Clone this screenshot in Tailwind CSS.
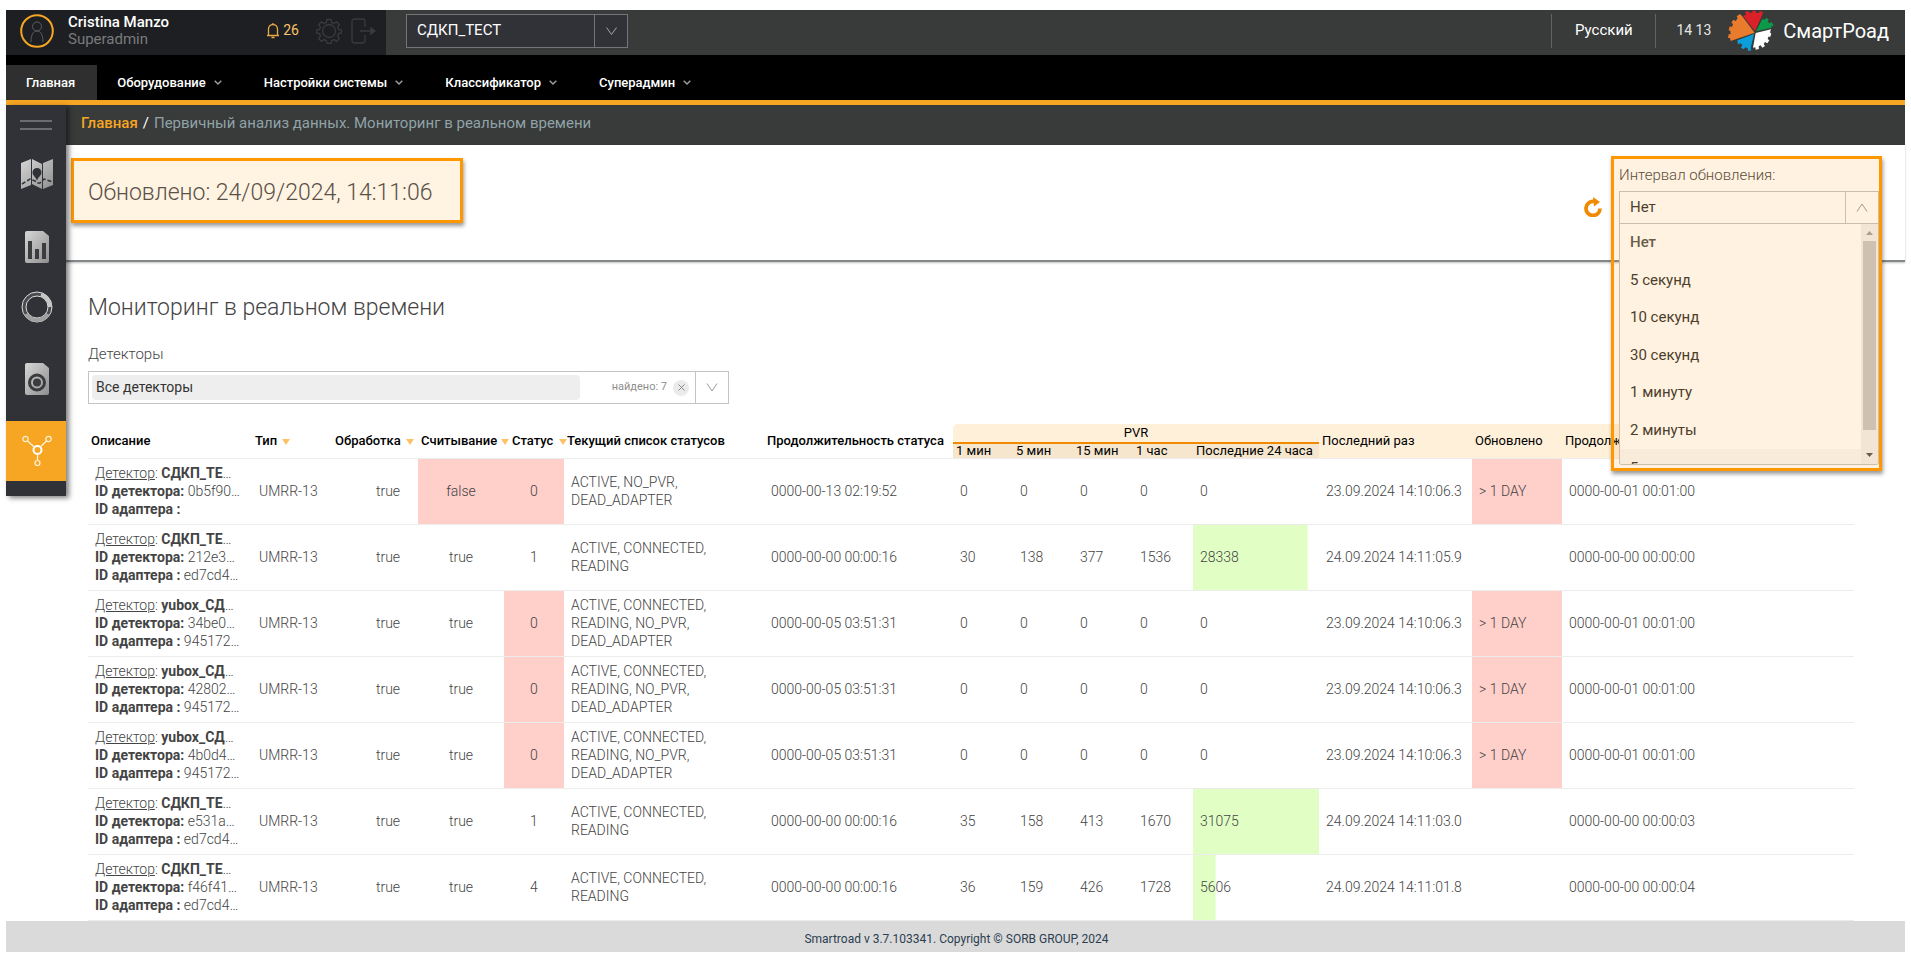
<!DOCTYPE html>
<html lang="ru">
<head>
<meta charset="utf-8">
<title>СмартРоад</title>
<script src="https://cdn.jsdelivr.net/npm/@tailwindcss/browser@4"></script>
</head>
<body class="bg-white px-[6px] pt-[10px] font-[Roboto,sans-serif] text-[14px] text-[#444]">

<!-- Top bar -->
<header>
  <div class="flex h-[45px] items-center bg-[#393a3a]">
    <div class="flex h-full w-[380px] items-center bg-[#1d1f22] pb-[4px] pl-[14px] pr-[10px]">
      <svg class="h-[34px] w-[34px]" viewBox="0 0 34 34" fill="none"><circle cx="17" cy="17" r="15.8" stroke="#f6a623" stroke-width="2"/><circle cx="17" cy="12.5" r="4.500" stroke="#5c5d60"/><path d="M11 28c0-7 2-11 6-11s6 4 6 11" stroke="#5c5d60"/></svg>
      <div class="ml-[14px] flex-1 text-[15px] leading-[17px]">
        <div class="font-medium text-white">Cristina Manzo</div>
        <div class="text-[#7a7b7d]">Superadmin</div>
      </div>
      <button class="flex items-center gap-[3px] text-[14px] text-[#f9c46b]" aria-label="Уведомления">
        <svg class="h-[17px] w-[14px]" viewBox="0 0 14 17" fill="none" stroke="#e8a94a" stroke-width="1.300"><path d="M1 13.500h12M2.500 13.500V7a4.500 4.500 0 0 1 9 0v6.500M7 2.500V1M5.500 15.500h3"/></svg>26
      </button>
      <button class="ml-[17px]" aria-label="Настройки"><svg class="h-[26px] w-[26px]" viewBox="0 0 26 26" fill="none" stroke="#3a3b3d" stroke-width="1.300"><circle cx="13" cy="13" r="6.500"/><path d="M11 1.500h4l.6 3 2.400 1 2.600-1.700 2.700 2.700-1.700 2.600 1 2.400 2.900.5v3l-2.900.6-1 2.400 1.700 2.600-2.700 2.700-2.600-1.700-2.400 1-.6 2.900h-4l-.6-2.900-2.400-1-2.600 1.700-2.700-2.700 1.700-2.600-1-2.400-2.900-.6v-3l2.900-.5 1-2.400-1.700-2.600 2.700-2.700 2.600 1.700 2.400-1z"/></svg></button>
      <button class="ml-[9px]" aria-label="Выход"><svg class="h-[26px] w-[25px]" viewBox="0 0 25 26" fill="none" stroke="#3a3b3d" stroke-width="1.300"><path d="M14 9V3.500A2.500 2.500 0 0 0 11.500 1h-8A2.500 2.500 0 0 0 1 3.500v19A2.500 2.500 0 0 0 3.500 25h8a2.500 2.500 0 0 0 2.500-2.500V17M9 13h14"/><path d="M20 10l4 3-4 3z" fill="#3a3b3d"/></svg></button>
    </div>
    <div class="relative mb-[4px] ml-[20px] flex h-[34px] w-[222px] border border-[#747577] bg-[#313238]">
      <select class="w-full appearance-none pb-[1px] pl-[10px] text-[15px] text-white" aria-label="Проект"><option>СДКП_ТЕСТ</option></select>
      <span class="pointer-events-none absolute inset-y-0 right-0 flex w-[33px] items-center justify-center border-l border-[#747577]"><svg class="h-[8px] w-[11px]" viewBox="0 0 11 8" fill="none" stroke="#a5a6a8"><path d="M.5.5l5 7 5-7"/></svg></span>
    </div>
    <div class="ml-auto flex items-center pb-[4px]">
      <button class="flex h-[34px] w-[105px] items-center justify-center border-x border-[#626363] text-[15px] text-white">Русский</button>
      <span class="ml-[20px] text-[14px] text-[#e6e6e6]">14 13</span>
      <a href="#" class="ml-[5px] flex items-center text-[20px] text-white"><svg class="h-[50px] w-[67px]" viewBox="0 1 201 150"><path fill="#e87b2c" d="M116 81 44 106 42 97 36 97 38 86 44 85 43 76 38 74 41 62 48 64 51 55 46 51 52 42 59 46 65 38 62 32 72 25 78 31z"/><path fill="#da2128" d="M117 77 81 31 90 27 87 19 97 16 101 22 109 20 109 15 119 15 120 21 128 22 131 16 141 19 139 27z"/><path fill="#0b9a4a" d="M120 77 139 40 146 43 150 36 158 41 155 48 160 53 166 49 173 59 165 63 167 66z"/><path fill="#fff" d="M119 82 165 71 162 80 166 84 163 93 157 93 155 100 160 104 154 113 147 109 143 115 147 121 139 126 134 119 128 122 129 130 119 132 118 125 111 126z"/><path fill="#0a9fdb" d="M114 85 104 127 106 134 96 136 95 128 88 125 83 131 75 126 79 118 74 113 66 116 64 104z"/></svg><span class="pr-[16px]">СмартРоад</span></a>
    </div>
  </div>
  <nav class="flex h-[50px] items-end border-b-[5px] border-[#f6a623] bg-black text-[13px] font-medium text-white">
    <a href="#" class="flex h-[35px] items-center bg-[#2f2f2f] pl-[20px] pr-[22px]">Главная</a>
    <button class="ml-[20px] flex h-[35px] items-center gap-[8px] pr-[22px]">Оборудование <svg class="h-[5px] w-[8px]" viewBox="0 0 8 5" fill="none" stroke="#a0a0a0" stroke-width="1.400"><path d="M.7.7 4 4 7.300.7"/></svg></button>
    <button class="ml-[20px] flex h-[35px] items-center gap-[8px] pr-[22px]">Настройки системы <svg class="h-[5px] w-[8px]" viewBox="0 0 8 5" fill="none" stroke="#a0a0a0" stroke-width="1.400"><path d="M.7.7 4 4 7.300.7"/></svg></button>
    <button class="ml-[20px] flex h-[35px] items-center gap-[8px] pr-[22px]">Классификатор <svg class="h-[5px] w-[8px]" viewBox="0 0 8 5" fill="none" stroke="#a0a0a0" stroke-width="1.400"><path d="M.7.7 4 4 7.300.7"/></svg></button>
    <button class="ml-[20px] flex h-[35px] items-center gap-[8px] pr-[22px]">Суперадмин <svg class="h-[5px] w-[8px]" viewBox="0 0 8 5" fill="none" stroke="#a0a0a0" stroke-width="1.400"><path d="M.7.7 4 4 7.300.7"/></svg></button>
  </nav>
</header>

<div class="flex items-start">
  <!-- Side menu -->
  <aside class="z-10 flex w-[60px] shrink-0 flex-col bg-[#313238] pb-[15px] shadow-[3px_2px_5px_rgba(0,0,0,0.5)]">
    <svg class="absolute" width="0" height="0"><defs><linearGradient id="g" x1="0" y1="0" x2="1" y2="1"><stop offset="0" stop-color="#d6d6d6"/><stop offset="1" stop-color="#8f8f8f"/></linearGradient></defs></svg>
    <button class="flex h-[40px] flex-col items-center justify-center gap-[6px]" aria-label="Меню"><span class="h-[2px] w-[32px] bg-[#6b6c70]"></span><span class="h-[2px] w-[32px] bg-[#6b6c70]"></span></button>
    <a href="#" class="flex h-[60px] items-center justify-center pb-[2px] pl-[2px]" aria-label="Карта"><svg class="h-[32px] w-[34px]" viewBox="0 0 34 32"><path fill="url(#g)" d="M1 5 11 1 11 27 1 31zM12 1l10 5v25l-10-5zM23 5l10-4v26l-10 4z"/><path fill="#313238" d="M17 10a4.500 4.500 0 0 1 4.500 4.500c0 3-3 4-4.500 8-1.500-4-4.500-5-4.500-8A4.500 4.500 0 0 1 17 10z"/><path d="M2 26l8-5 5 2 2 2 3 0 4-4 9 3" fill="none" stroke="#313238" stroke-width="1.500" stroke-dasharray="4 2"/></svg></a>
    <a href="#" class="mt-3 flex h-[60px] items-center justify-center pl-[2px]" aria-label="Отчёты"><svg class="h-[32px] w-[24px]" viewBox="0 0 24 32"><path fill="url(#g)" d="M2 0h16l6 5v25a2 2 0 0 1-2 2H2a2 2 0 0 1-2-2V2a2 2 0 0 1 2-2z"/><path fill="#3b3c40" d="M3 10h4v18H3zM10 18h4v10h-4zM17 12h4v16h-4z"/></svg></a>
    <a href="#" class="flex h-[60px] items-center justify-center pl-[2px]" aria-label="Статистика"><svg class="h-[32px] w-[32px]" viewBox="0 0 32 32" fill="none"><circle cx="16" cy="16" r="13" stroke="#4a4b4e" stroke-width="4"/><circle cx="16" cy="16" r="15" stroke="#dcdcdc"/><circle cx="16" cy="16" r="11" stroke="#dcdcdc"/><path d="M20 3.600A13 13 0 0 1 29 16" stroke="#c6c6c6" stroke-width="4"/><path d="M27 23A13 13 0 0 1 5 23" stroke="#a0a0a0" stroke-width="4"/></svg></a>
    <a href="#" class="mt-3 flex h-[60px] items-center justify-center pl-[2px]" aria-label="Камеры"><svg class="h-[32px] w-[24px]" viewBox="0 0 24 32"><path fill="url(#g)" d="M2 0h16l6 5v25a2 2 0 0 1-2 2H2a2 2 0 0 1-2-2V2a2 2 0 0 1 2-2z"/><circle cx="12" cy="19.500" r="7.500" fill="none" stroke="#3b3c40" stroke-width="3"/><circle cx="12" cy="19.500" r="4" fill="#3b3c40"/></svg></a>
    <a href="#" class="mt-3 flex h-[60px] items-center justify-center bg-[#f6a623] pl-[2px]" aria-label="Детекторы"><svg class="h-[32px] w-[32px]" viewBox="0 0 32 32" fill="none" stroke="#fff"><circle cx="16.500" cy="15" r="4" stroke-width="2"/><g stroke="#fff3dc" stroke-width="1.200"><circle cx="4.500" cy="4" r="2.700"/><circle cx="27.500" cy="4" r="2.700"/><circle cx="16.500" cy="28" r="2.500"/><path d="M6.500 6l7 6.200M25.500 6l-6.500 6.200M16.500 19v6.500"/></g></svg></a>
  </aside>

  <main class="min-w-0 flex-1">
    <div class="flex h-[40px] items-center gap-[5px] bg-[#393a3a] pb-[4px] pl-[15px] text-[15px]">
      <a href="#" class="font-medium text-[#f6a623]">Главная</a><span class="text-white">/</span><span class="text-[#8fa3a8]">Первичный анализ данных. Мониторинг в реальном времени</span>
    </div>

    <section class="flex h-[117px] justify-between border-b-2 border-[#858888] pr-[26px] shadow-[0_1px_2px_rgba(0,0,0,0.25)]">
      <div class="ml-[5px] mt-[13px] flex h-[65px] items-center border-[3px] border-[#ff9800] bg-[#fff3e2] pl-[14px] pr-[28px] pt-[5px] shadow-[1px_3px_4px_rgba(0,0,0,0.4)]">
        <h1 class="text-[23px] leading-[34px] font-light text-[#5a5048]">Обновлено: 24/09/2024, 14:11:06</h1>
      </div>
      <div class="flex items-start">
        <button class="mr-[17px] mt-[52px]" aria-label="Обновить"><svg class="h-[20px] w-[18px]" viewBox="0 0 18 20"><path d="M10 4.500A7 7 0 1 0 16 11.500" fill="none" stroke="#f08a00" stroke-width="3.800"/><path d="M9 0l7 5-6 4.500z" fill="#f08a00"/></svg></button>
        <div class="relative z-20 w-[260px] pt-[19px]">
          <label for="interval" class="block h-[27px] text-[15px] leading-[22px] font-light">Интервал обновления:</label>
          <div class="relative flex h-[33px] border border-[#c4c4c4] bg-white">
            <select id="interval" class="w-full appearance-none pl-[10px] text-[15px] text-[#333]"><option>Нет</option></select>
            <span class="pointer-events-none absolute inset-y-0 right-0 flex w-[33px] items-center justify-center border-l border-[#c4c4c4]"><svg class="h-[9px] w-[12px]" viewBox="0 0 12 9" fill="none" stroke="#999"><path d="M1 8.500l5-7.500 5 7.500"/></svg></span>
          </div>
          <div class="absolute inset-x-0 top-full flex h-[241px] overflow-hidden rounded-b-[3px] border border-t-0 border-[#c4c4c4] bg-white">
            <ul role="listbox" aria-label="Интервал обновления" class="flex-1 text-[15px] text-[#333]">
              <li role="option" class="pl-[10px] leading-[37px] font-medium text-[#555]">Нет</li>
              <li role="option" class="pl-[10px] leading-[38px]">5 секунд</li>
              <li role="option" class="pl-[10px] leading-[37px]">10 секунд</li>
              <li role="option" class="pl-[10px] leading-[38px]">30 секунд</li>
              <li role="option" class="pl-[10px] leading-[37px]">1 минуту</li>
              <li role="option" class="pl-[10px] leading-[38px]">2 минуты</li>
              <li role="option" class="bg-[#f7f7f7] pl-[10px] leading-[38px]">5 минут</li>
            </ul>
            <div class="flex w-[17px] flex-col items-center justify-between bg-[#f1f1f1] py-[7px]">
              <svg class="h-[4px] w-[7px]" viewBox="0 0 7 4"><path d="M0 4 3.500 0 7 4z" fill="#a0a0a0"/></svg>
              <span class="mb-[18px] h-[189px] w-[13px] bg-[#c8c8c8]"></span>
              <svg class="h-[4px] w-[7px]" viewBox="0 0 7 4"><path d="M0 0 3.500 4 7 0z" fill="#555"/></svg>
            </div>
          </div>
          <div class="pointer-events-none absolute -left-[8px] -right-[3px] top-[11px] h-[315px] border-[3px] border-[#ff9800] bg-[#ff9800]/12 shadow-[1px_3px_4px_rgba(0,0,0,0.4)]"></div>
        </div>
      </div>
    </section>

    <section class="pl-[22px] pr-[51px]">
      <h2 class="pt-[29px] text-[23px] leading-[34px] font-light text-[#444]">Мониторинг в реальном времени</h2>
      <label for="detectors" class="mt-[18px] block text-[15px] leading-[22px] font-light">Детекторы</label>
      <div class="mt-[6px] flex h-[33px] w-[641px] items-center border border-[#c4c4c4] pl-[3px]">
        <input id="detectors" value="Все детекторы" class="h-[25px] w-[488px] rounded-[4px] bg-[#eee] px-[4px] pb-[2px] text-[14px] text-[#333]">
        <span class="ml-auto text-[11px] text-[#8e8e8e]">найдено: 7</span>
        <button class="mx-[6px] flex h-[16px] w-[16px] items-center justify-center rounded-full bg-[#ebebeb]" aria-label="Очистить"><svg class="h-[7px] w-[7px]" viewBox="0 0 7 7" stroke="#888"><path d="M.5.5l6 6M6.500.5l-6 6"/></svg></button>
        <button class="flex h-full w-[33px] items-center justify-center border-l border-[#c4c4c4]" aria-label="Открыть список"><svg class="h-[9px] w-[12px]" viewBox="0 0 12 9" fill="none" stroke="#999"><path d="M1 .5l5 7.500 5-7.500"/></svg></button>
      </div>

      <table class="mt-[20px] w-full table-fixed border-separate border-spacing-0 text-[14px] leading-[18px]">
        <colgroup>
          <col class="w-[164px]"><col class="w-[80px]"><col class="w-[86px]"><col class="w-[86px]"><col class="w-[60px]"><col class="w-[200px]"><col class="w-[189px]">
          <col class="w-[60px]"><col class="w-[60px]"><col class="w-[60px]"><col class="w-[60px]"><col class="w-[126px]"><col class="w-[153px]"><col class="w-[90px]"><col>
        </colgroup>
        <thead class="text-left text-[13px] whitespace-nowrap text-black">
          <tr class="h-[20px]">
            <th rowspan="2" class="border-b border-[#ececec] p-0 pl-[3px] font-medium">Описание</th>
            <th rowspan="2" class="border-b border-[#ececec] p-0 pl-[3px] font-medium">Тип <span class="ml-[2px] inline-block border-x-4 border-t-[6px] border-x-transparent border-t-[#ffc168]"></span></th>
            <th rowspan="2" class="border-b border-[#ececec] p-0 pl-[3px] font-medium">Обработка <span class="ml-[2px] inline-block border-x-4 border-t-[6px] border-x-transparent border-t-[#ffc168]"></span></th>
            <th rowspan="2" class="border-b border-[#ececec] p-0 pl-[3px] font-medium">Считывание<span class="ml-[4px] inline-block border-x-4 border-t-[6px] border-x-transparent border-t-[#ffc168]"></span></th>
            <th rowspan="2" class="border-b border-[#ececec] p-0 pl-[8px] font-medium">Статус <span class="ml-[2px] inline-block border-x-4 border-t-[6px] border-x-transparent border-t-[#ffc168]"></span></th>
            <th rowspan="2" class="border-b border-[#ececec] p-0 pl-[3px] font-medium">Текущий список статусов</th>
            <th rowspan="2" class="border-b border-[#ececec] p-0 pl-[3px] font-medium">Продолжительность статуса</th>
            <th colspan="5" class="rounded-tl-[5px] border-b-2 border-[#f08a00] bg-[#fff0da] p-0 text-center font-normal">PVR</th>
            <th rowspan="2" class="border-b border-[#ececec] bg-[#fff0da] p-0 pl-[3px] font-normal">Последний раз</th>
            <th rowspan="2" class="border-b border-[#ececec] bg-[#fff0da] p-0 pl-[3px] font-normal">Обновлено</th>
            <th rowspan="2" class="border-b border-[#ececec] bg-[#fff0da] p-0 pl-[3px] font-normal">Продолжительность</th>
          </tr>
          <tr class="h-[15px] leading-[14px]">
            <th class="border-b border-[#ececec] bg-[#f5e6cd] p-0 pl-[3px] font-normal">1 мин</th>
            <th class="border-b border-[#ececec] bg-[#f5e6cd] p-0 pl-[3px] font-normal">5 мин</th>
            <th class="border-b border-[#ececec] bg-[#f5e6cd] p-0 pl-[3px] font-normal">15 мин</th>
            <th class="border-b border-[#ececec] bg-[#f5e6cd] p-0 pl-[3px] font-normal">1 час</th>
            <th class="border-b border-[#ececec] bg-[#f5e6cd] p-0 pl-[3px] font-normal">Последние 24 часа</th>
          </tr>
        </thead>
        <tbody id="rows" class="font-light"></tbody>
      </table>
    </section>
  </main>
</div>

<footer class="flex h-[31px] items-center justify-center bg-[#dadada] pl-[2px] pt-[4px] text-[12px] text-[#2c3e50]">Smartroad v 3.7.103341. Copyright © SORB GROUP, 2024</footer>

<script>
// name, detector id, adapter id, reading, status, statuses, duration, PVR values, bar %, last time, late, duration
const data = [
  ['СДКП_ТЕ', '0b5f90…', '', 'false', 0, 'ACTIVE, NO_PVR,<br>DEAD_ADAPTER', '0000-00-13 02:19:52', [0, 0, 0, 0, 0], 0, '23.09.2024 14:10:06.3', true, '0000-00-01 00:01:00'],
  ['СДКП_ТЕ', '212e3…', 'ed7cd4…', 'true', 1, 'ACTIVE, CONNECTED,<br>READING', '0000-00-00 00:00:16', [30, 138, 377, 1536, 28338], 91, '24.09.2024 14:11:05.9', false, '0000-00-00 00:00:00'],
  ['yubox_СД', '34be0…', '945172…', 'true', 0, 'ACTIVE, CONNECTED,<br>READING, NO_PVR,<br>DEAD_ADAPTER', '0000-00-05 03:51:31', [0, 0, 0, 0, 0], 0, '23.09.2024 14:10:06.3', true, '0000-00-01 00:01:00'],
  ['yubox_СД', '42802…', '945172…', 'true', 0, 'ACTIVE, CONNECTED,<br>READING, NO_PVR,<br>DEAD_ADAPTER', '0000-00-05 03:51:31', [0, 0, 0, 0, 0], 0, '23.09.2024 14:10:06.3', true, '0000-00-01 00:01:00'],
  ['yubox_СД', '4b0d4…', '945172…', 'true', 0, 'ACTIVE, CONNECTED,<br>READING, NO_PVR,<br>DEAD_ADAPTER', '0000-00-05 03:51:31', [0, 0, 0, 0, 0], 0, '23.09.2024 14:10:06.3', true, '0000-00-01 00:01:00'],
  ['СДКП_ТЕ', 'e531a…', 'ed7cd4…', 'true', 1, 'ACTIVE, CONNECTED,<br>READING', '0000-00-00 00:00:16', [35, 158, 413, 1670, 31075], 100, '24.09.2024 14:11:03.0', false, '0000-00-00 00:00:03'],
  ['СДКП_ТЕ', 'f46f41…', 'ed7cd4…', 'true', 4, 'ACTIVE, CONNECTED,<br>READING', '0000-00-00 00:00:16', [36, 159, 426, 1728, 5606], 18, '24.09.2024 14:11:01.8', false, '0000-00-00 00:00:04'],
];
const red = on => on ? 'bg-[#ffcfca]' : '';
document.getElementById('rows').innerHTML = data.map(r => `
<tr class="h-[66px] whitespace-nowrap">
  <td class="border-b border-[#ececec] p-0 pb-[2px] pl-[7px]"><a href="#" class="underline">Детектор</a>: <b class="font-bold">${r[0]}</b>…<br><b class="font-bold">ID детектора:</b> ${r[1]}<br><b class="font-bold">ID адаптера :</b> ${r[2]}</td>
  <td class="border-b border-[#ececec] p-0 pb-[2px] pl-[7px]">UMRR-13</td>
  <td class="border-b border-[#ececec] p-0 pb-[2px] pl-[26px] text-center">true</td>
  <td class="border-b border-[#ececec] bg-clip-padding p-0 pb-[2px] text-center ${red(r[3] === 'false')}">${r[3]}</td>
  <td class="border-b border-[#ececec] bg-clip-padding p-0 pb-[2px] text-center ${red(r[4] === 0)}">${r[4]}</td>
  <td class="border-b border-[#ececec] p-0 pb-[2px] pl-[7px]">${r[5]}</td>
  <td class="border-b border-[#ececec] p-0 pb-[2px] pl-[7px]">${r[6]}</td>
  ${r[7].slice(0, 4).map(v => `<td class="border-b border-[#ececec] p-0 pb-[2px] pl-[7px]">${v}</td>`).join('')}
  <td class="border-b border-[#ececec] bg-[linear-gradient(#e1ffc4,#e1ffc4)] bg-no-repeat bg-clip-padding p-0 pb-[2px] pl-[7px]" style="background-size:${r[8]}% 100%">${r[7][4]}</td>
  <td class="border-b border-[#ececec] p-0 pb-[2px] pl-[7px]">${r[9]}</td>
  <td class="border-b border-[#ececec] bg-clip-padding p-0 pb-[2px] pl-[7px] ${red(r[10])}">${r[10] ? '&gt; 1 DAY' : ''}</td>
  <td class="border-b border-[#ececec] p-0 pb-[2px] pl-[7px]">${r[11]}</td>
</tr>`).join('');
</script>
</body>
</html>
